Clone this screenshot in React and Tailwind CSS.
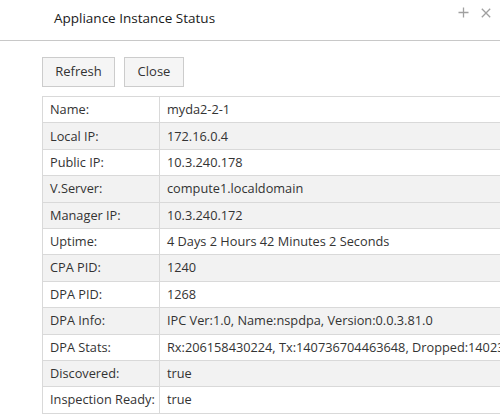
import React from "react";

const rows = [
  ["Name:", "myda2-2-1", false],
  ["Local IP:", "172.16.0.4", true],
  ["Public IP:", "10.3.240.178", false],
  ["V.Server:", "compute1.localdomain", true],
  ["Manager IP:", "10.3.240.172", true],
  ["Uptime:", "4 Days 2 Hours 42 Minutes 2 Seconds", false],
  ["CPA PID:", "1240", true],
  ["DPA PID:", "1268", false],
  ["DPA Info:", "IPC Ver:1.0, Name:nspdpa, Version:0.0.3.81.0", true],
  ["DPA Stats:", "Rx:206158430224, Tx:140736704463648, Dropped:140236704463648", false],
  ["Discovered:", "true", true],
  ["Inspection Ready:", "true", false],
];

export default function App() {
  return (
    <div className="w-[500px] h-[418px] overflow-hidden bg-white text-[#333] font-['Open_Sans',sans-serif]">
      <div className="relative h-[41px] border-b border-[#c8c8c8] flex items-center pl-[54px]">
        <span className="text-[13.5px] text-[#1a1a1a] -mt-[3px]">Appliance Instance Status</span>
        <div className="absolute right-[9px] top-[7px] flex items-center gap-[12px]">
          <svg width="11" height="11" viewBox="0 0 11 11">
            <path d="M5.5 0.5v10M0.5 5.5h10" stroke="#a0a0a0" strokeWidth="1.3" fill="none" />
          </svg>
          <svg width="10" height="10" viewBox="0 0 10 10">
            <path d="M0.8 0.8l8.4 8.4M9.2 0.8l-8.4 8.4" stroke="#a0a0a0" strokeWidth="1.3" fill="none" />
          </svg>
        </div>
      </div>
      <div className="pl-[42px] pt-[16px]">
        <div className="flex gap-[9px]">
          <button className="w-[73px] h-[30px] border border-[#cccccc] bg-[#f5f5f5] text-[13px] text-[#333]">Refresh</button>
          <button className="w-[60px] h-[30px] border border-[#cccccc] bg-[#f5f5f5] text-[13px] text-[#333]">Close</button>
        </div>
        <div className="mt-[9px] w-[700px] border-t border-l border-[#d9d9d9]">
          {rows.map(([k, v, g]) => (
            <div
              key={k}
              className={`flex h-[26.4px] border-b border-[#d9d9d9] text-[12.75px] ${g ? "bg-[#f2f2f2]" : "bg-white"}`}
            >
              <div className="w-[117px] shrink-0 border-r border-[#d9d9d9] pl-[7px] flex items-center whitespace-nowrap">{k}</div>
              <div className="pl-[7px] flex items-center whitespace-nowrap">{v}</div>
            </div>
          ))}
        </div>
      </div>
    </div>
  );
}
